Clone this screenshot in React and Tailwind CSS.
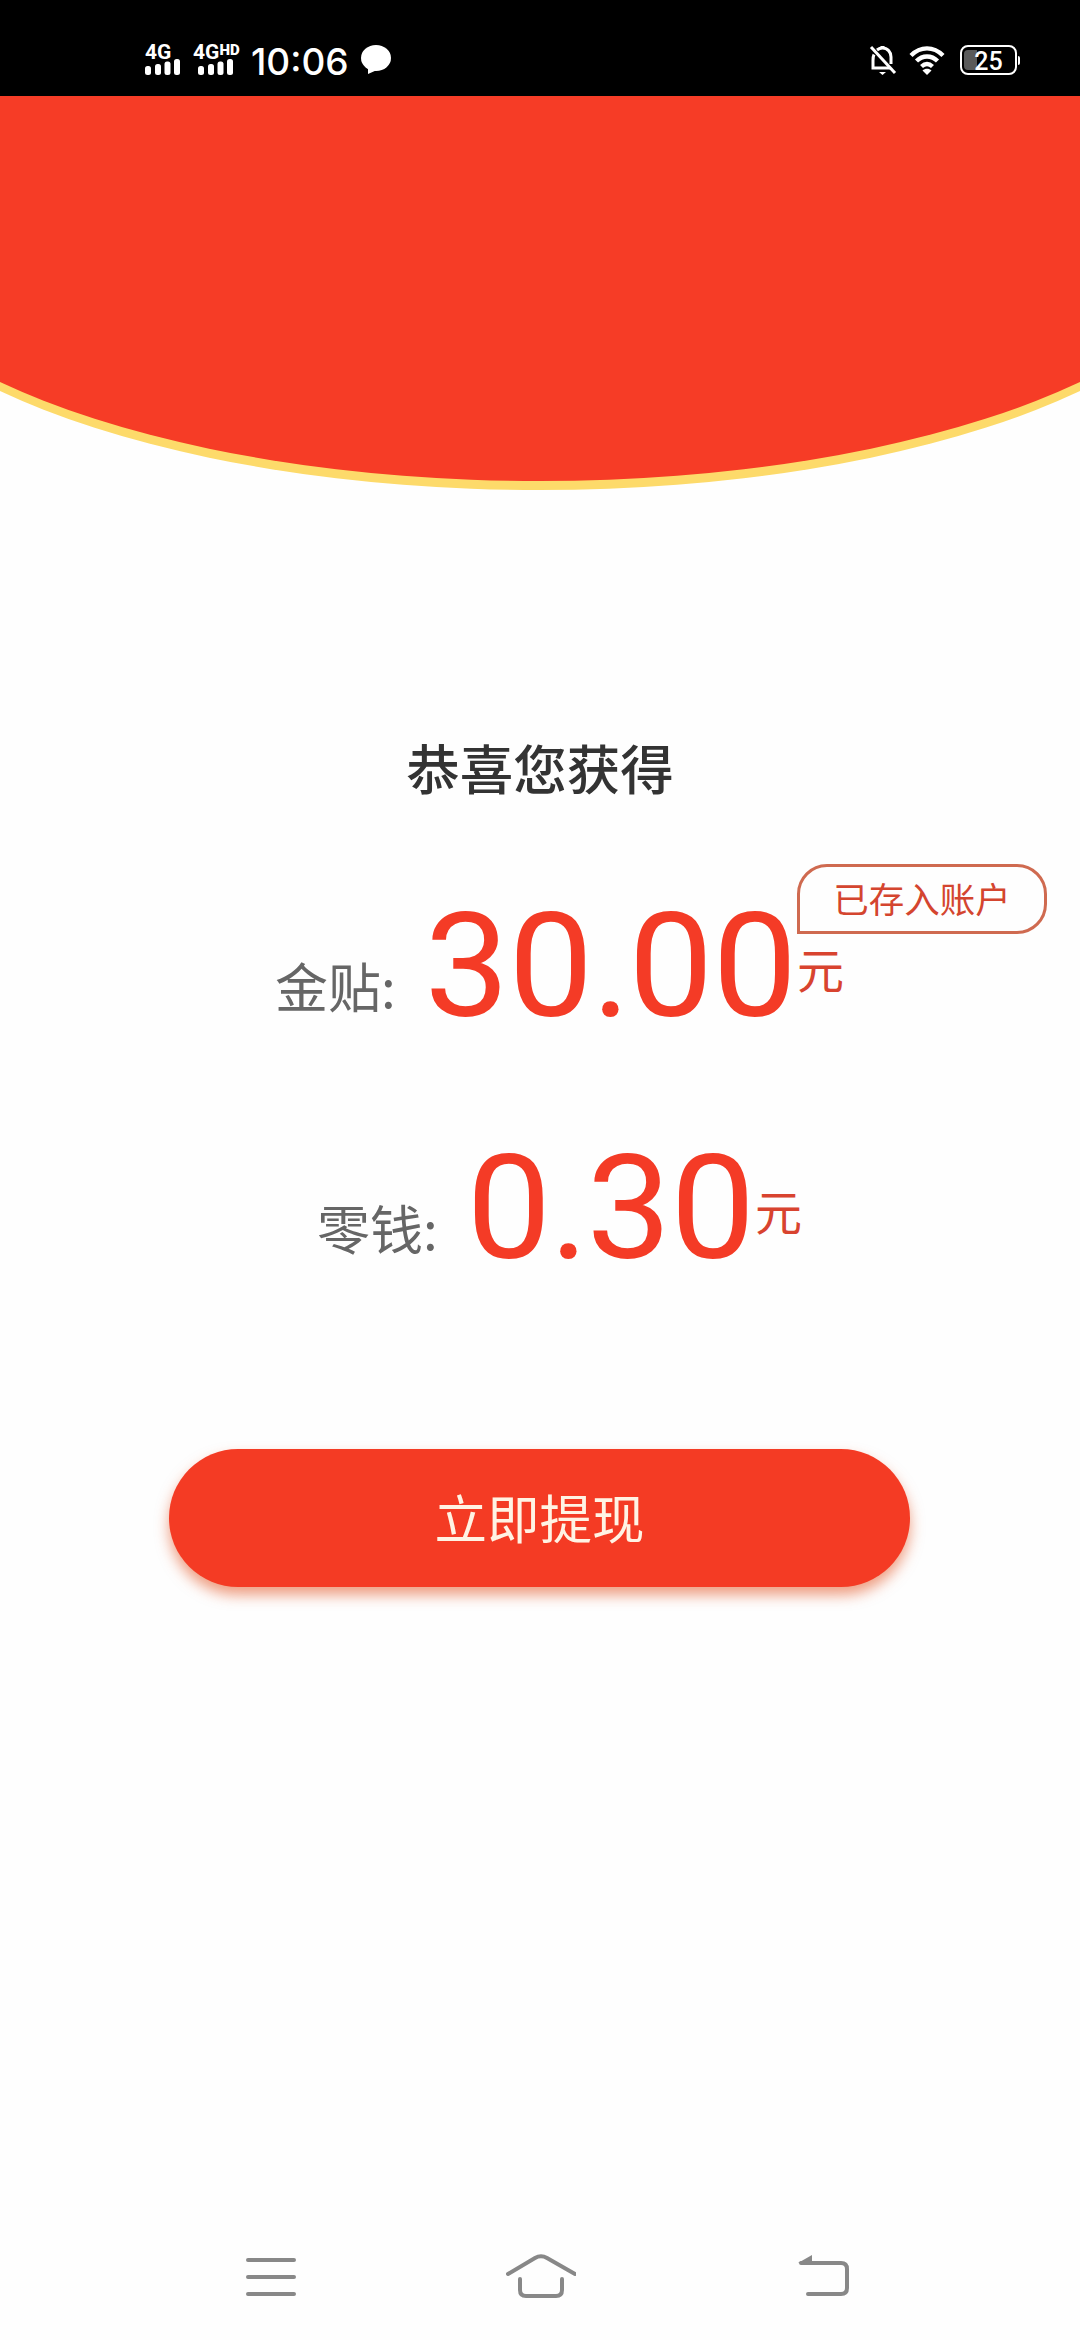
import React from 'react';

const rewards = [
  { id: 'subsidy', label: '金贴', amount: '30.00', badge: '已存入账户', offset: 'pl-[275px]' },
  { id: 'change', label: '零钱', amount: '0.30', offset: 'pl-[317px]' }
];

const SignalBars = () => (
  <svg className="w-[36px] h-[17px]" viewBox="0 0 36 17" fill="currentColor">
    <rect x="0" y="8" width="6" height="9" rx="2.5" />
    <rect x="10" y="6" width="6" height="11" rx="2.5" />
    <rect x="19.5" y="3.5" width="6" height="13.5" rx="2.5" />
    <rect x="29" y="1" width="6" height="16" rx="2.5" />
  </svg>
);

const StatusBar = () => (
  <div className="h-24 shrink-0 bg-black text-white flex items-start justify-between pl-[145px] pr-[60px] font-['Roboto','Noto_Sans_CJK_SC',sans-serif]">
    <div className="flex items-start">
      <div className="w-[48px] pt-[43px]">
        <div className="h-[15px] text-[21px] leading-[19px] font-bold">4G</div>
        <SignalBars />
      </div>
      <div className="w-[58px] pt-[43px]">
        <div className="h-[15px] flex items-start text-[21px] leading-[19px] font-bold">
          4G<span className="text-[15px] leading-[14px] font-black">HD</span>
        </div>
        <div className="pl-[5px]">
          <SignalBars />
        </div>
      </div>
      <div className="w-[110px] pt-[40px] text-[37px] leading-[44px] font-medium font-['Inter',sans-serif]">10:06</div>
      <svg className="mt-[44px] w-[30px] h-[31px]" viewBox="0 0 30 31" fill="currentColor">
        <ellipse cx="15" cy="14" rx="15" ry="13" />
        <path d="M7 22v8l9-4z" />
      </svg>
    </div>

    <div className="flex items-start">
      {/* Muted bell */}
      <svg className="mt-[45px] w-[28px] h-[31px]" viewBox="0 0 28 31" fill="none" stroke="currentColor" strokeWidth="3">
        <path d="M2 2l24 26" />
        <path d="M5 9.5c-1 2-1 4-1 6V23H21" />
        <path d="M8 5c2-1.6 4-2 5.500-2 5 0 8.500 4 8.500 9v7" />
        <path d="M10 27h7l-3.500 3z" fill="currentColor" stroke="none" />
        <path d="M11.500 2.500h4" />
      </svg>
      <svg className="ml-[12px] mt-[46px] w-[36px] h-[29px]" viewBox="0 0 36 29" fill="none" stroke="currentColor" strokeWidth="4.4">
        <path d="M2 9.500C11.500 0 24.500 0 34 9.500" />
        <path d="M7.500 15c6-6 15-6 21 0" />
        <path d="M12.500 20.500c3.500-3.200 7.500-3.200 11 0" />
        <path d="M18 29l-4.500-4.500c2.500-2.500 6.500-2.500 9 0z" fill="currentColor" stroke="none" />
      </svg>
      <div className="ml-[15px] mt-[45px] flex items-center">
        <div className="relative w-[57px] h-[30px] rounded-[8px] border-[2.500px] border-white flex items-center justify-center text-[25px] leading-none font-medium">
          <div className="absolute left-[2px] top-[3px] w-[13px] h-[20px] rounded-l-[4px] bg-[#5a5a5a]"></div>
          <span className="relative top-px">25</span>
        </div>
        <div className="ml-px w-[2px] h-[9px] rounded-r bg-white"></div>
      </div>
    </div>
  </div>
);

const Amount = ({ value }) => (
  <div className="flex pt-[22px] text-[145px] leading-[144px] text-[#f43b26] font-['Roboto',sans-serif]">
    {value.split('').map((char, index) => (
      <span
        key={index}
        className={char === '.' ? 'w-[36px] flex justify-center' : 'w-[84px] flex justify-center scale-x-104'}
      >
        {char}
      </span>
    ))}
  </div>
);

const RewardRow = ({ reward }) => (
  <div className={`h-[242px] flex items-start ${reward.offset}`}>
    <div className="w-[150px] pt-[83px] text-[53px] leading-[60px] text-[#666]">{reward.label}:</div>
    <Amount value={reward.amount} />
    <div className="relative">
      <div className="pt-[70px] text-[47px] leading-[52px] text-[#d8432f]">元</div>
      {reward.badge && (
        <div className="absolute left-0 -top-[8px] w-[250px] h-[70px] pb-[2px] flex items-center justify-center border-[3px] border-[#cf6a50] rounded-[30px] rounded-bl-none text-[35.500px] text-[#d4452f] whitespace-nowrap">
          {reward.badge}
        </div>
      )}
    </div>
  </div>
);

const NavigationBar = () => (
  <div className="h-[90px] flex items-start text-[#888]">
    <svg className="ml-[244px] mt-[6px] w-[54px] h-[42px]" viewBox="0 0 54 42" fill="none" stroke="currentColor" strokeWidth="4" strokeLinecap="round">
      <path d="M4 4h46M4 21h46M4 38h46" />
    </svg>
    <svg className="ml-[208px] mt-[2px] w-[70px] h-[48px]" viewBox="0 0 70 48" fill="none" stroke="currentColor" strokeWidth="4" strokeLinecap="round">
      <path d="M2 22L29 6q6-3.500 12 0l28 16" />
      <path d="M14 27v11q0 6 6 6h30q6 0 6-6V27" />
    </svg>
    <svg className="ml-[221px] mt-[2px] w-[54px] h-[46px]" viewBox="0 0 54 46" fill="none" stroke="currentColor" strokeWidth="4" strokeLinecap="round">
      <path d="M4 11h40q6 0 6 6v19q0 6-6 6H11" />
      <path d="M1 11L15 3v9z" fill="currentColor" stroke="none" />
    </svg>
  </div>
);

const App = () => {
  return (
    <div className="w-[1080px] h-[2340px] overflow-hidden flex flex-col bg-[#fefefe] font-['Noto_Sans_CJK_SC',sans-serif]">
      <StatusBar />

      {/* Curved red header */}
      <div className="h-[400px] shrink-0 overflow-hidden flex items-end justify-center pb-[15px]">
        <div className="w-[1404px] h-[548px] shrink-0 rounded-b-[50%] bg-[#f63c26] shadow-[0_9px_0_#fdda6a]"></div>
      </div>

      <main className="flex-1 flex flex-col">
        <h1 className="mt-[231px] text-center text-[53.500px] leading-[80px] font-medium text-[#333]">恭喜您获得</h1>

        <div className="mt-[65px]">
          {rewards.map((reward) => (
            <RewardRow key={reward.id} reward={reward} />
          ))}
        </div>

        <button className="mt-[93px] ml-[169px] w-[741px] h-[138px] pb-[4px] rounded-full bg-[#f43b24] text-[52.500px] text-[#fff3e4] shadow-[0_8px_14px_rgba(225,80,30,0.55)]">
          立即提现
        </button>
      </main>

      <NavigationBar />
    </div>
  );
};

export default App;
